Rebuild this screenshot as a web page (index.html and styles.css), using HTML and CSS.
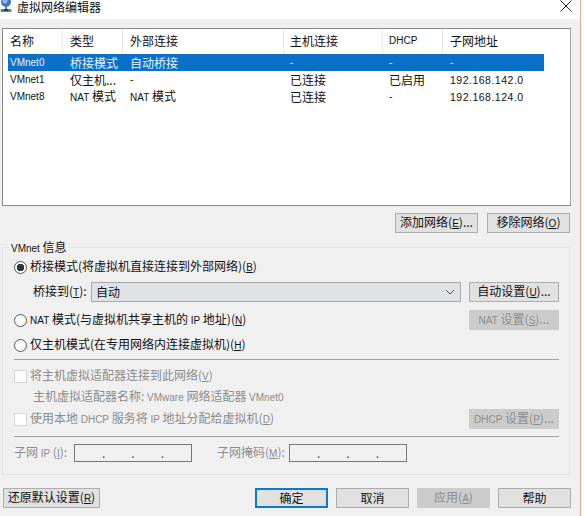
FILE: index.html
```html
<!DOCTYPE html>
<html lang="zh-CN">
<head>
  <meta charset="UTF-8" />
  <title>虚拟网络编辑器</title>
  <link rel="stylesheet" href="styles.css">
</head>
<body>
  <div class="window">
    <div class="titlebar">
      <svg class="app-icon" viewBox="0 0 14 13" width="14" height="13">
        <circle cx="6" cy="2" r="5" fill="#3f74c4"/>
        <circle cx="5" cy="1" r="2.5" fill="#8fb8ea"/>
        <rect x="5" y="6.5" width="2" height="3" fill="#5b7fa8"/>
        <rect x="0.5" y="9" width="11" height="3" rx="1" fill="#3f9a5a"/>
        <rect x="4" y="9" width="4" height="2" fill="#23406e"/>
      </svg>
      <span class="title">虚拟网络编辑器</span>
      <svg class="close-icon" viewBox="0 0 12 12" width="12" height="12">
        <path d="M0.5 0.5 L11.5 11.5 M11.5 0.5 L0.5 11.5" stroke="#222" stroke-width="1" fill="none"/>
      </svg>
    </div>

    <div class="content">
      <!-- 网络列表 -->
      <div class="list">
        <div class="row head">
          <span>名称</span>
          <span>类型</span>
          <span>外部连接</span>
          <span>主机连接</span>
          <span class="en">DHCP</span>
          <span>子网地址</span>
        </div>
        <div class="row selected">
          <span class="en">VMnet0</span>
          <span>桥接模式</span>
          <span>自动桥接</span>
          <span class="en">-</span>
          <span class="en">-</span>
          <span class="en">-</span>
        </div>
        <div class="row">
          <span class="en">VMnet1</span>
          <span>仅主机...</span>
          <span class="en">-</span>
          <span>已连接</span>
          <span>已启用</span>
          <span class="ip">192.168.142.0</span>
        </div>
        <div class="row">
          <span class="en">VMnet8</span>
          <span><span class="en">NAT</span> 模式</span>
          <span><span class="en">NAT</span> 模式</span>
          <span>已连接</span>
          <span class="en">-</span>
          <span class="ip">192.168.124.0</span>
        </div>
      </div>

      <div class="list-actions">
        <button class="btn">添加网络(<u class="en">E</u>)...</button>
        <button class="btn">移除网络(<u class="en">O</u>)</button>
      </div>

      <!-- VMnet 信息 -->
      <fieldset class="group">
        <legend><span class="en">VMnet</span> 信息</legend>

        <label class="option first">
          <input type="radio" name="mode" checked>
          <span>桥接模式(将虚拟机直接连接到外部网络)(<u class="en">B</u>)</span>
        </label>

        <div class="bridge-row">
          <span class="bridge-label">桥接到(<u class="en">T</u>):</span>
          <div class="select">
            <span>自动</span>
            <svg viewBox="0 0 10 6" width="10" height="6">
              <path d="M1 1 L5 5 L9 1" stroke="#555" stroke-width="1" fill="none"/>
            </svg>
          </div>
          <button class="btn side">自动设置(<u class="en">U</u>)...</button>
        </div>

        <div class="option-row nat-row">
          <label class="option">
            <input type="radio" name="mode">
            <span><span class="en">NAT</span> 模式(与虚拟机共享主机的 <span class="en">IP</span> 地址)(<u class="en">N</u>)</span>
          </label>
          <button class="btn side" disabled><span class="en">NAT</span> 设置(<u class="en">S</u>)...</button>
        </div>

        <label class="option host-row">
          <input type="radio" name="mode">
          <span>仅主机模式(在专用网络内连接虚拟机)(<u class="en">H</u>)</span>
        </label>

        <hr class="sep">

        <label class="option muted adapter-row">
          <input type="checkbox" disabled>
          <span>将主机虚拟适配器连接到此网络(<u class="en">V</u>)</span>
        </label>
        <div class="adapter-name muted">主机虚拟适配器名称: <span class="en">VMware</span> 网络适配器 <span class="en">VMnet0</span></div>

        <div class="option-row dhcp-row">
          <label class="option muted">
            <input type="checkbox" disabled>
            <span>使用本地 <span class="en">DHCP</span> 服务将 <span class="en">IP</span> 地址分配给虚拟机(<u class="en">D</u>)</span>
          </label>
          <button class="btn side" disabled><span class="en">DHCP</span> 设置(<u class="en">P</u>)...</button>
        </div>

        <hr class="sep second">

        <div class="subnet-row muted">
          <span class="subnet-label">子网 <span class="en">IP</span> (<u class="en">I</u>):</span>
          <div class="ip-input"><i>.</i><i>.</i><i>.</i></div>
          <span class="subnet-label mask">子网掩码(<u class="en">M</u>):</span>
          <div class="ip-input"><i>.</i><i>.</i><i>.</i></div>
        </div>
      </fieldset>

      <div class="footer">
        <button class="btn reset">还原默认设置(<u class="en">R</u>)</button>
        <div class="footer-right">
          <button class="btn foot default">确定</button>
          <button class="btn foot">取消</button>
          <button class="btn foot" disabled>应用(<u class="en">A</u>)</button>
          <button class="btn foot">帮助</button>
        </div>
      </div>
    </div>
  </div>
</body>
</html>
```

FILE: styles.css
```css
* {
  box-sizing: border-box;
}
body {
  margin: 0;
  background: #fbfbfb;
  font-family: "Noto Sans CJK SC", "Liberation Sans", sans-serif;
  font-size: 12px;
  line-height: 16px;
  color: #111;
  overflow: hidden;
}
.en {
  font-family: "Liberation Sans", sans-serif;
  font-size: 10px;
}
.ip {
  font-family: "Liberation Sans", sans-serif;
  font-size: 10.5px;
  letter-spacing: 0.5px;
}
.window {
  width: 581px;
  height: 516px;
  background: #f0f0f0;
  border-right: 1px solid #dcae8e;
}
.titlebar {
  display: flex;
  align-items: flex-start;
  height: 19px;
  background: #fff;
}
.title {
  margin: 1px 0 0 3px;
  line-height: 12px;
}
.close-icon {
  margin-left: auto;
  margin-right: 8px;
}
.content {
  padding: 9px 9px 0 2px;
}

/* lista */
.list {
  width: 569px;
  height: 178px;
  background: #fff;
  border: 1px solid #8a8a8a;
  border-right-color: #a0a0a0;
  padding-left: 5px;
}
.row {
  display: grid;
  grid-template-columns: 55px 60px 161px 99px 60px 101px;
  width: 536px;
  height: 17px;
  align-items: center;
}
.row > span {
  padding-left: 7px;
  white-space: nowrap;
}
.row > span:first-child {
  padding-left: 2px;
}
.row > span:nth-child(4),
.row > span:nth-child(5) {
  padding-left: 6px;
}
.head {
  height: 25px;
}
.head > span {
  height: 25px;
  line-height: 24px;
  border-right: 1px solid #e8e8e8;
}
.head > span:last-child {
  border-right: none;
}
.selected {
  background: #0a70c8;
  color: #e8f2fb;
}

.list-actions {
  display: flex;
  justify-content: flex-end;
  gap: 9px;
  margin-top: 7px;
  padding-right: 1px;
}

/* botoes */
.btn {
  height: 20px;
  width: 83px;
  padding: 0;
  background: #e1e1e1;
  border: 1px solid #adadad;
  font: inherit;
  color: #111;
  white-space: nowrap;
}
.btn:disabled {
  background: #cccccc;
  border-color: #cccccc;
  color: #8c8c8c;
}
.btn.side {
  width: 90px;
}
.btn.reset {
  width: 97px;
}
.btn.foot {
  width: 73px;
}
.btn.default {
  border: 2px solid #0f78c8;
}

/* grupo */
.group {
  margin: 6px 0 0 0;
  padding: 0 10px 0 11px;
  width: 568px;
  height: 236px;
  border: 1px solid #e4e4e4;
  min-width: 0;
}
.group legend {
  padding: 0 1px;
  margin-left: -4px;
  height: 16px;
}
.option {
  display: flex;
  align-items: center;
  gap: 3px;
  height: 18px;
}
.option input {
  appearance: none;
  width: 13px;
  height: 13px;
  margin: 0;
  flex: none;
  background: #fff;
  border: 1px solid #555;
}
.option input[type="radio"] {
  border-radius: 50%;
}
.option input[type="radio"]:checked {
  background: radial-gradient(circle, #333 0 3.5px, #fff 4px);
}
.option input:disabled {
  border-color: #d6d6d6;
}
.option.first {
  margin-top: 3px;
}
.bridge-row {
  display: flex;
  align-items: center;
  margin-top: 6px;
  height: 20px;
}
.bridge-label {
  width: 77px;
  padding-left: 19px;
  white-space: nowrap;
}
.select {
  display: flex;
  align-items: center;
  justify-content: space-between;
  width: 370px;
  height: 20px;
  margin-right: 8px;
  padding: 0 5px 0 4px;
  background: #dfe3e6;
  border: 1px solid #a8a8a8;
}
.option-row {
  display: flex;
  align-items: center;
  justify-content: space-between;
  height: 20px;
}
.nat-row {
  margin-top: 8px;
}
.host-row {
  margin-top: 6px;
}
.sep {
  margin: 5px 0 0 0;
  height: 1px;
  border: none;
  background: #a0a0a0;
}
.adapter-row {
  margin-top: 7px;
}
.muted {
  color: #8c8c8c;
}
.adapter-name {
  margin-top: 3px;
  padding-left: 19px;
  height: 16px;
}
.dhcp-row {
  margin-top: 5px;
}
.sep.second {
  margin-top: 7px;
}
.subnet-row {
  display: flex;
  align-items: center;
  margin-top: 7px;
  height: 18px;
}
.subnet-label {
  width: 60px;
  white-space: nowrap;
}
.subnet-label.mask {
  width: 72px;
  margin-left: 25px;
}
.ip-input {
  display: flex;
  justify-content: space-around;
  width: 118px;
  height: 18px;
  padding: 0 14px;
  background: #f0f0f0;
  border: 1px solid #777;
}
.ip-input i {
  font-style: normal;
  color: #555;
}

.footer {
  display: flex;
  justify-content: space-between;
  margin-top: 13px;
  padding: 0 0 0 1px;
  width: 569px;
}
.footer-right {
  display: flex;
  gap: 8px;
}
```
